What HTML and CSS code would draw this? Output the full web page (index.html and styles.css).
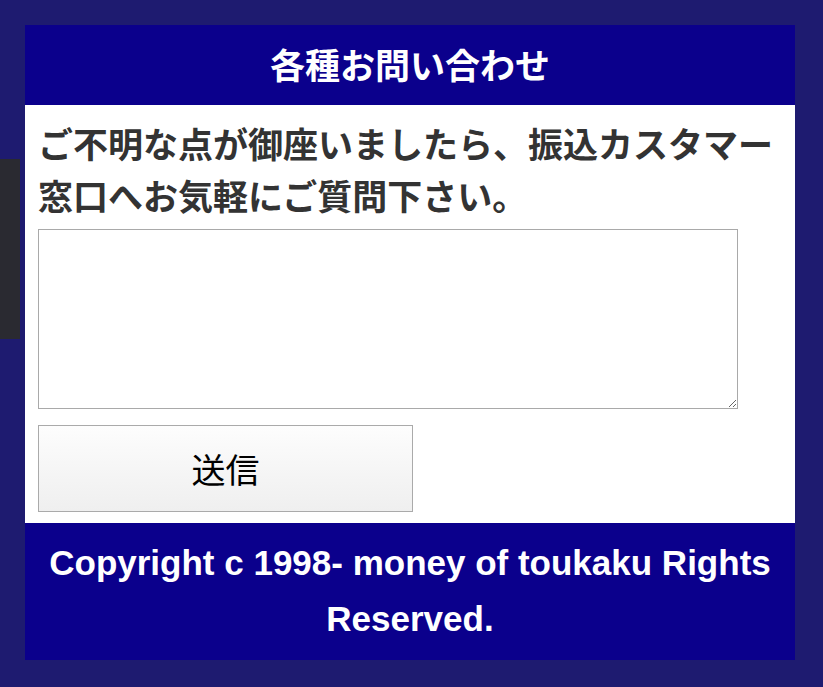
FILE: index.html
```html
<!DOCTYPE html>
<html lang="ja">
<head>
  <meta charset="UTF-8">
  <meta name="viewport" content="width=device-width, initial-scale=1.0">
  <title>各種お問い合わせ</title>
  <link rel="stylesheet" href="styles.css">
</head>
<body>

  <!-- Side tab -->
  <div class="side-tab"></div>

  <div class="contact-container">
    <!-- Header -->
    <div class="contact-header">
      <h1>各種お問い合わせ</h1>
    </div>

    <!-- Form -->
    <div class="contact-body">
      <p class="lead">ご不明な点が御座いましたら、振込カスタマー窓口へお気軽にご質問下さい。</p>
      <form class="contact-form">
        <textarea name="message"></textarea>
        <button type="submit" class="send-btn">送信</button>
      </form>
    </div>

    <!-- Footer -->
    <div class="contact-footer">
      Copyright c 1998- money of toukaku Rights Reserved.
    </div>
  </div>

</body>
</html>
```

FILE: styles.css
```css
body {
  margin: 0;
  padding: 25px 0;
  background-color: #1e1b70;
  font-family: "Noto Sans CJK JP", "Liberation Sans", sans-serif;
}

.side-tab {
  position: fixed;
  left: 0;
  top: 159px;
  width: 20px;
  height: 180px;
  background-color: #2a2a31;
}

.contact-container {
  width: 770px;
  margin-left: 25px;
}

.contact-header {
  height: 77px;
  padding-bottom: 3px;
  background-color: #0b008c;
  display: flex;
  align-items: center;
  justify-content: center;
}

.contact-header h1 {
  margin: 0;
  font-size: 35px;
  font-weight: bold;
  color: #ffffff;
  line-height: 1;
}

.contact-body {
  background-color: #ffffff;
  padding: 12px 13px 11px;
}

.lead {
  margin: 0;
  font-size: 35px;
  font-weight: bold;
  line-height: 52px;
  color: #333333;
}

.contact-form {
  margin-top: 8px;
}

.contact-form textarea {
  display: block;
  box-sizing: border-box;
  width: 700px;
  height: 180px;
  margin: 0;
  border: 1px solid #a9a9a9;
  padding: 2px;
}

.send-btn {
  display: block;
  box-sizing: border-box;
  width: 375px;
  height: 87px;
  margin-top: 16px;
  border: 1px solid #aaaaaa;
  border-radius: 0;
  background: linear-gradient(#fdfdfd, #efefef);
  font-family: "Noto Sans CJK JP", sans-serif;
  font-size: 34px;
  color: #000000;
  cursor: pointer;
}

.contact-footer {
  background-color: #0b008c;
  color: #ffffff;
  font-family: "Liberation Sans", Arial, sans-serif;
  font-size: 35px;
  font-weight: bold;
  line-height: 56px;
  text-align: center;
  padding: 12px 15px 13px;
}
```
